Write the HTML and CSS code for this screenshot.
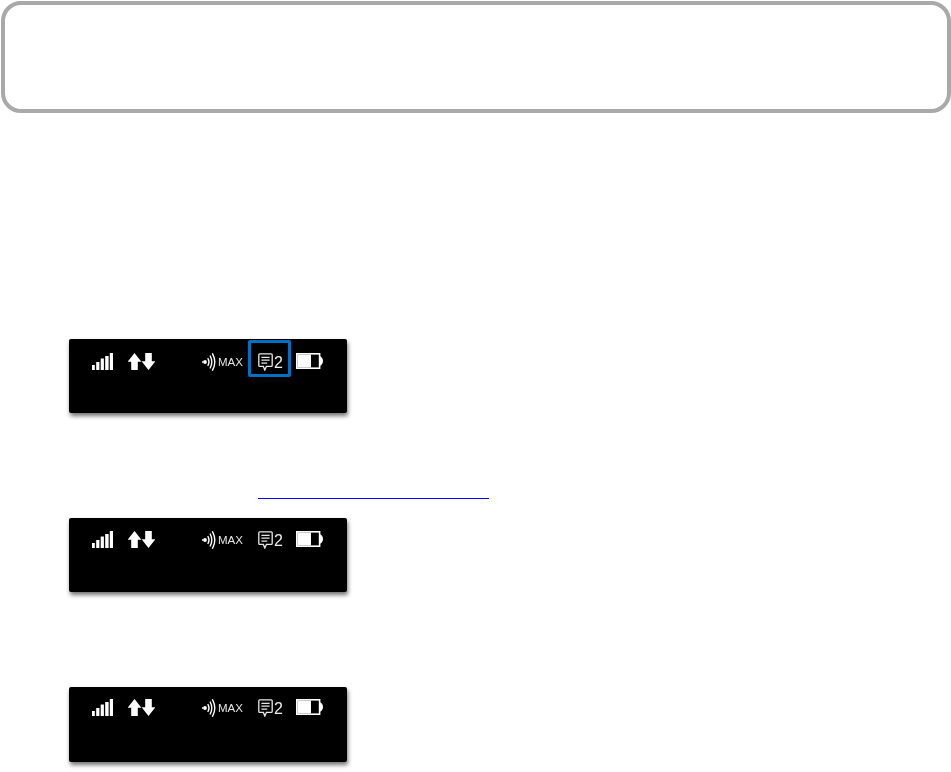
FILE: index.html
```html
<!DOCTYPE html>
<html lang="en">
<head>
<meta charset="utf-8">
<title>Status bar</title>
<link rel="stylesheet" href="styles.css">
</head>
<body>
<svg class="defs" width="0" height="0" aria-hidden="true">
  <symbol id="signal" viewBox="0 0 21 17">
    <path d="M0 12h2.800v5H0zM4.200 9h3.200v8H4.200zM8.700 5.500h3.200V17H8.700zM13.200 3h3.400v14h-3.400zM17.800 0H21v17h-3.200z" fill="#fff"/>
  </symbol>
  <symbol id="arrows" viewBox="0 0 27 17">
    <path d="M6.500 0 13.400 8.800H9.800V17H3.200V8.800H-.4z" fill="#fff"/>
    <path d="M20.500 17 13.600 8.200h3.600V0h6.600v8.200h3.600z" fill="#fff"/>
  </symbol>
  <symbol id="waves" viewBox="0 0 14 18">
    <g fill="none" stroke="#fff" stroke-width="1.400" stroke-linecap="round">
      <path d="M6 5.500q2 3.500 0 7"/>
      <path d="M8.200 3q3.200 6 0 12"/>
      <path d="M10.600 .8q4.400 8.200 0 16.400"/>
    </g>
    <circle cx="3" cy="9" r="1.900" fill="#fff"/>
    <path d="M0 8.300h1.400v1.400H0z" fill="#fff"/>
  </symbol>
  <symbol id="message" viewBox="0 0 15 18">
    <path d="M1.800 .8h11.400q1 0 1 1v10.600q0 1-1 1H8.400L6.800 17 5.400 13.400H1.800q-1 0-1-1V1.800q0-1 1-1z" fill="none" stroke="#e8e8e8" stroke-width="1.300"/>
    <path d="M3.400 4.300h8.200M3.400 7.200h8.200M3.400 10.100h5.800" fill="none" stroke="#e8e8e8" stroke-width="1.300"/>
  </symbol>
  <symbol id="battery" viewBox="0 0 27 16">
    <rect x=".8" y=".8" width="22.800" height="14.400" fill="none" stroke="#fff" stroke-width="1.600"/>
    <rect x="1.500" y="1.500" width="13.500" height="13" fill="#fff"/>
    <path d="M24 3.200q3 1.500 3 4.800t-3 4.800z" fill="#fff"/>
  </symbol>
</svg>

<main class="page">
  <div class="callout"></div>

  <section class="device device-first">
    <div class="status status-a">
      <svg class="ico ico-signal"><use href="#signal"/></svg>
      <svg class="ico ico-arrows"><use href="#arrows"/></svg>
      <svg class="ico ico-waves"><use href="#waves"/></svg>
      <span class="max">MAX</span>
      <svg class="ico ico-message"><use href="#message"/></svg>
      <span class="count">2</span>
      <svg class="ico ico-battery"><use href="#battery"/></svg>
    </div>
    <div class="highlight"></div>
  </section>

  <a class="link-rule" href="#" aria-label="link"></a>

  <section class="device device-second">
    <div class="status status-b">
      <svg class="ico ico-signal"><use href="#signal"/></svg>
      <svg class="ico ico-arrows"><use href="#arrows"/></svg>
      <svg class="ico ico-waves"><use href="#waves"/></svg>
      <span class="max">MAX</span>
      <svg class="ico ico-message"><use href="#message"/></svg>
      <span class="count">2</span>
      <svg class="ico ico-battery"><use href="#battery"/></svg>
    </div>
  </section>

  <section class="device device-third">
    <div class="status status-c">
      <svg class="ico ico-signal"><use href="#signal"/></svg>
      <svg class="ico ico-arrows"><use href="#arrows"/></svg>
      <svg class="ico ico-waves"><use href="#waves"/></svg>
      <span class="max">MAX</span>
      <svg class="ico ico-message"><use href="#message"/></svg>
      <span class="count">2</span>
      <svg class="ico ico-battery"><use href="#battery"/></svg>
    </div>
  </section>
</main>
</body>
</html>
```

FILE: styles.css
```css
html, body {
  margin: 0;
  padding: 0;
  background: #fff;
  font-family: "Liberation Sans", Arial, sans-serif;
}

.defs {
  position: absolute;
}

.page {
  display: flex;
  flex-direction: column;
  height: 772px;
  padding-top: 1px;
  box-sizing: border-box;
  overflow: hidden;
}

.callout {
  box-sizing: border-box;
  flex: none;
  width: 950px;
  height: 112px;
  margin-left: 1px;
  border: 4px solid #a9a9a9;
  border-radius: 20px;
  background: #fff;
}

.device {
  position: relative;
  flex: none;
  box-sizing: border-box;
  width: 278px;
  height: 74px;
  margin-left: 69px;
  background: #000;
  border-radius: 2px;
  box-shadow: 1px 3px 4px rgba(0, 0, 0, 0.55);
}

.device-first {
  margin-top: 226px;
}

.device-second {
  margin-top: 19px;
}

.device-third {
  height: 75px;
  margin-top: 95px;
}

.status {
  display: flex;
  align-items: flex-start;
  padding-left: 23px;
  color: #fff;
  filter: blur(0.4px);
}

.status-a {
  padding-top: 14px;
}

.status-b {
  padding-top: 13px;
}

.status-c {
  padding-top: 12px;
}

.ico {
  display: block;
  flex: none;
  overflow: visible;
}

.ico-signal {
  width: 21px;
  height: 17px;
}

.ico-arrows {
  width: 27px;
  height: 17px;
  margin-left: 15px;
}

.ico-waves {
  width: 14px;
  height: 18px;
  margin-left: 47px;
}

.max {
  width: 25px;
  margin-left: 2px;
  font-size: 11.5px;
  line-height: 18px;
  white-space: nowrap;
  color: #e4e4e4;
}

.ico-message {
  width: 15px;
  height: 18px;
  margin-left: 15px;
}

.count {
  width: 10px;
  margin-left: 1px;
  font-size: 16px;
  line-height: 19px;
  color: #eee;
}

.ico-battery {
  width: 27px;
  height: 16px;
  margin-left: 12px;
}

.highlight {
  position: absolute;
  left: 179px;
  top: 1px;
  box-sizing: border-box;
  width: 43px;
  height: 37px;
  border: 3px solid #0070c0;
  border-radius: 2px;
}

.link-rule {
  display: block;
  flex: none;
  width: 231px;
  height: 1px;
  margin-left: 258px;
  margin-top: 85px;
  background: #0000ff;
}
```
